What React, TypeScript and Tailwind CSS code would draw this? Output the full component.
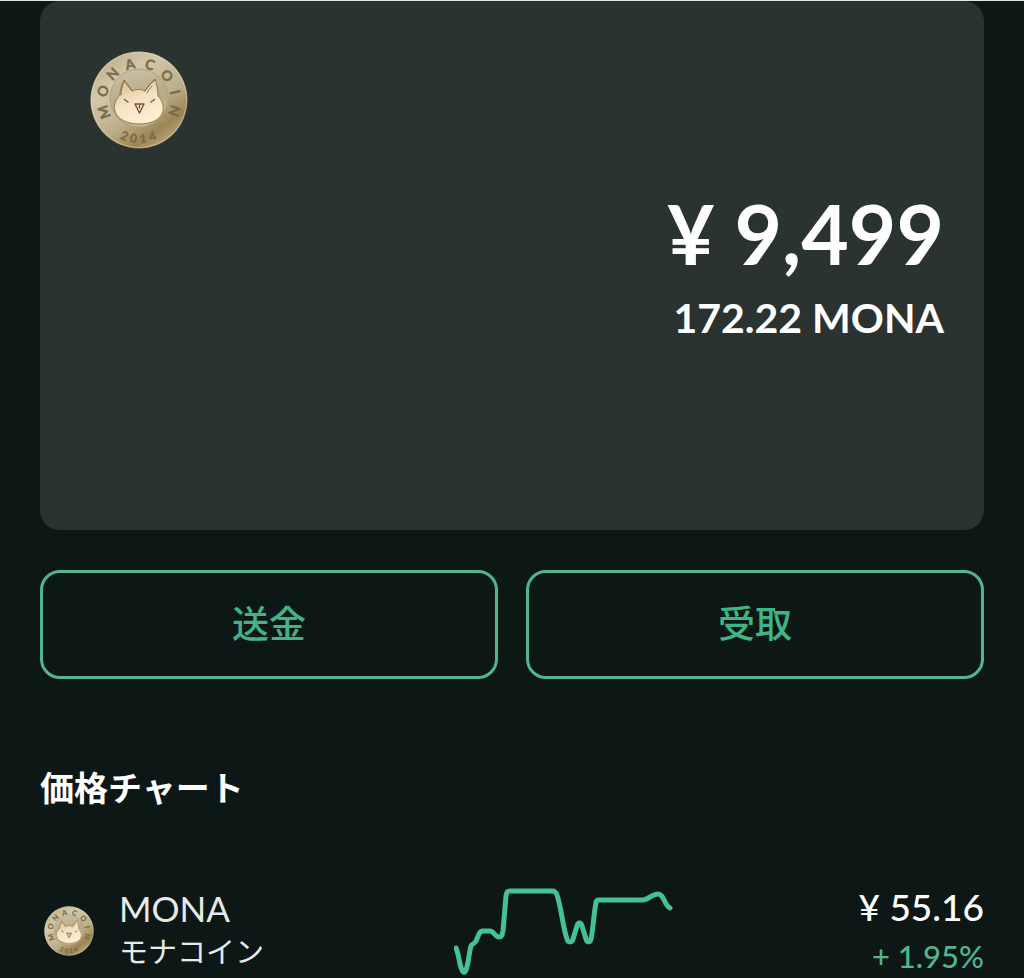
const latin = 'font-[Lato,"Noto_Sans_CJK_JP",sans-serif]';

const rimLetters = [
  { char: 'M', angle: -109 },
  { char: 'O', angle: -76 },
  { char: 'N', angle: -45 },
  { char: 'A', angle: -14 },
  { char: 'C', angle: 17 },
  { char: 'O', angle: 49 },
  { char: 'I', angle: 78 },
  { char: 'N', angle: 107 },
];

const yearDigits = [
  { char: '2', angle: 22 },
  { char: '0', angle: 8 },
  { char: '1', angle: -6 },
  { char: '4', angle: -20 },
];

interface CoinProps {
  id: string;
  className: string;
}

function Coin({ id, className }: CoinProps) {
  return (
    <svg viewBox="0 0 98 98" className={className} role="img" aria-label="Monacoin">
      <defs>
        <linearGradient id={`${id}-rim`} x1="0.1" y1="0" x2="0.8" y2="1">
          <stop offset="0" stopColor="#b9aa86" />
          <stop offset="0.3" stopColor="#d2c8ac" />
          <stop offset="0.62" stopColor="#bcae88" />
          <stop offset="0.82" stopColor="#9b8555" />
          <stop offset="1" stopColor="#c5b184" />
        </linearGradient>
        <linearGradient id={`${id}-inner`} x1="0.3" y1="0" x2="0.6" y2="1">
          <stop offset="0" stopColor="#c9bfa4" />
          <stop offset="0.55" stopColor="#b8aa86" />
          <stop offset="1" stopColor="#c9b98f" />
        </linearGradient>
        <linearGradient id={`${id}-face`} x1="0.2" y1="0" x2="0.6" y2="1">
          <stop offset="0" stopColor="#d8bf92" />
          <stop offset="0.5" stopColor="#f6e2c4" />
          <stop offset="1" stopColor="#fff0d4" />
        </linearGradient>
      </defs>
      <circle cx="49" cy="49" r="48.5" fill={`url(#${id}-rim)`} />
      <circle cx="49" cy="49" r="47.5" fill="none" stroke="#e2d6b6" strokeWidth="1" opacity="0.5" />
      <circle cx="49" cy="47" r="29" fill={`url(#${id}-inner)`} stroke="#a99a75" strokeWidth="0.8" />
      <g
        fill="#7a6b4b"
        stroke="#7a6b4b"
        strokeWidth="0.4"
        fontFamily="Lato, sans-serif"
        fontWeight="700"
        textAnchor="middle"
      >
        {rimLetters.map(({ char, angle }) => (
          <text key={angle} x="49" y="17" fontSize="14" transform={`rotate(${angle} 49 49)`}>
            {char}
          </text>
        ))}
        {yearDigits.map(({ char, angle }) => (
          <text key={angle} x="49" y="92" fontSize="12" transform={`rotate(${angle} 49 49)`}>
            {char}
          </text>
        ))}
      </g>
      <path
        d="M25 60C23 54 26 48 30 44C30 38 32 33 34 29C37 32 40 36 42 40C46 38 51 38 55 40C58 35 61 31 65 28C67 34 68 40 68 45C72 49 74 54 73 60C71 69 61 73 49 73C37 73 27 68 25 60Z"
        fill={`url(#${id}-face)`}
        stroke="#94794c"
        strokeWidth="1"
      />
      <path
        d="M34 31C32 35 31 40 31 44M34 30L42 40M65 29C61 32 58 36 55 40M62 35C60 37 58 40 57 42"
        fill="none"
        stroke="#83693f"
        strokeWidth="0.9"
        strokeLinecap="round"
      />
      <path
        d="M34.500 48.500L38 51M64.500 48.500L61 51M45 53H54L49.500 62ZM49.500 54V57"
        fill="none"
        stroke="#705a3c"
        strokeWidth="1.400"
        strokeLinecap="round"
        strokeLinejoin="round"
      />
    </svg>
  );
}

function BalanceCard() {
  return (
    <section className="min-h-[529px] rounded-[20px] bg-[#2b3331] px-10 pt-[50px]">
      <Coin id="card-coin" className="ml-[10px] size-[98px]" />
      <div className={`mt-10 text-right font-bold text-white ${latin}`}>
        <p className="text-[82px] leading-[88px]">¥ 9,499</p>
        <p className="mt-[18px] text-[41px] leading-[46px]">172.22 MONA</p>
      </div>
    </section>
  );
}

function ActionButton({ label }: { label: string }) {
  return (
    <button
      type="button"
      className="h-[109px] flex-1 rounded-[20px] border-3 border-[#52b58d] pb-0.5 text-[37px] font-medium text-[#3fb488]"
    >
      {label}
    </button>
  );
}

function Sparkline() {
  return (
    <svg viewBox="0 0 220 92" className="mt-px h-[92px] w-[220px] shrink-0" role="img" aria-label="MONA price">
      <path
        d="M2 62C5 68 5 78 8 84C9 87 11 87 12 84C15 76 15 66 17 60C18 57 20 59 22 55L25 48C26 46 27 45 29 45H36C40 45 41 51 45 51C48 51 48 49 49 45L52 10C53 6 53 5 56 5H98C101 5 102 6 103 9C107 20 109 42 113 53C114 57 118 57 119 53L123 40C124 36 127 36 128 40L132 53C133 57 136 57 137 53C139 45 140 25 142 17C142 14 143 14 145 14H189C194 14 198 8 204 8C210 8 210 19 216 22"
        fill="none"
        stroke="#45c295"
        strokeWidth="5"
        strokeLinecap="round"
        strokeLinejoin="round"
      />
    </svg>
  );
}

function PriceRow() {
  return (
    <div className="flex items-start justify-between">
      <div className="flex flex-4 items-start">
        <Coin id="row-coin" className="mt-[21px] ml-1 size-[50px] shrink-0" />
        <div className="mt-px ml-[25px] text-[#e6ebe9]">
          <p className="text-[35px] leading-[44px] font-normal">MONA</p>
          <p className="text-[29px] leading-[44px] font-normal">モナコイン</p>
        </div>
      </div>
      <Sparkline />
      <div className={`flex-3 text-right ${latin}`}>
        <p className="text-[37px] leading-[44px] font-medium text-white">¥ 55.16</p>
        <p className="mt-1 text-[31px] leading-[46px] font-medium text-[#52b58d]">+ 1.95%</p>
      </div>
    </div>
  );
}

export default function App() {
  return (
    <main className={`h-screen overflow-hidden border-t border-[#dfe9e5] bg-[#0d1715] px-10 ${latin}`}>
      <BalanceCard />
      <div className="mt-10 flex gap-7">
        <ActionButton label="送金" />
        <ActionButton label="受取" />
      </div>
      <h2 className="mt-[84px] text-[34px] leading-[50px] font-bold text-white">価格チャート</h2>
      <div className="mt-[72px]">
        <PriceRow />
      </div>
    </main>
  );
}
